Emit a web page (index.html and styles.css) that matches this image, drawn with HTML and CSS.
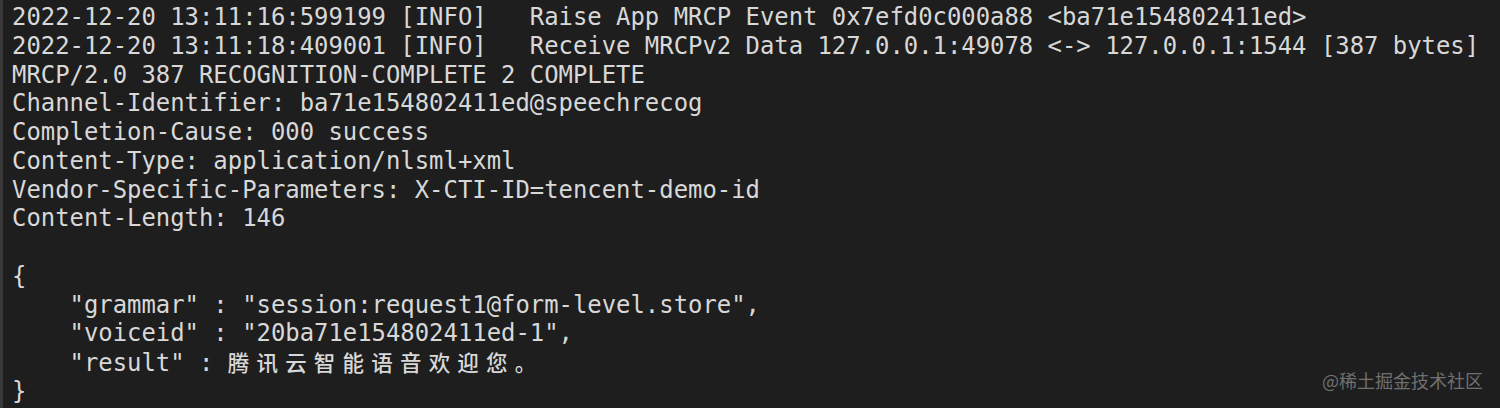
FILE: index.html
```html
<!DOCTYPE html>
<html lang="zh">
<head>
<meta charset="utf-8">
<title>MRCP log</title>
<link rel="stylesheet" href="styles.css">
</head>
<body>
<div class="terminal">
  <div class="line">2022-12-20 13:11:16:599199 [INFO]   Raise App MRCP Event 0x7efd0c000a88 &lt;ba71e154802411ed&gt;</div>
  <div class="line">2022-12-20 13:11:18:409001 [INFO]   Receive MRCPv2 Data 127.0.0.1:49078 &lt;-&gt; 127.0.0.1:1544 [387 bytes]</div>
  <div class="line">MRCP/2.0 387 RECOGNITION-COMPLETE 2 COMPLETE</div>
  <div class="line">Channel-Identifier: ba71e154802411ed@speechrecog</div>
  <div class="line">Completion-Cause: 000 success</div>
  <div class="line">Content-Type: application/nlsml+xml</div>
  <div class="line">Vendor-Specific-Parameters: X-CTI-ID=tencent-demo-id</div>
  <div class="line">Content-Length: 146</div>
  <div class="line"> </div>
  <div class="line">{</div>
  <div class="line">    "grammar" : "session:request1@form-level.store",</div>
  <div class="line">    "voiceid" : "20ba71e154802411ed-1",</div>
  <div class="line">    "result" : <span class="cjk">腾讯云智能语音欢迎您。</span></div>
  <div class="line">}</div>
  <div class="watermark">@稀土掘金技术社区</div>
</div>
</body>
</html>
```
FILE: styles.css
```css
html, body {
  margin: 0;
  padding: 0;
  background: #1e1e1e;
}
.terminal {
  position: relative;
  height: 408px;
  box-sizing: border-box;
  border-left: 3px solid #3a3a3a;
  padding: 3px 0 0 9px;
  overflow: hidden;
  background: #1e1e1e;
  color: #d8d8d8;
  font-family: "DejaVu Sans Mono", "Noto Sans CJK SC", monospace;
  font-size: 23.9px;
  line-height: 28.75px;
}
.line {
  white-space: pre;
  height: 28.75px;
}
.cjk {
  font-family: "Noto Sans CJK SC", sans-serif;
  font-size: 21.5px;
  font-weight: 500;
  letter-spacing: 7.2px;
}
.watermark {
  position: absolute;
  right: 17px;
  top: 368px;
  font-family: "Noto Sans CJK SC", sans-serif;
  font-size: 18px;
  line-height: 24px;
  color: #707070;
}
```
